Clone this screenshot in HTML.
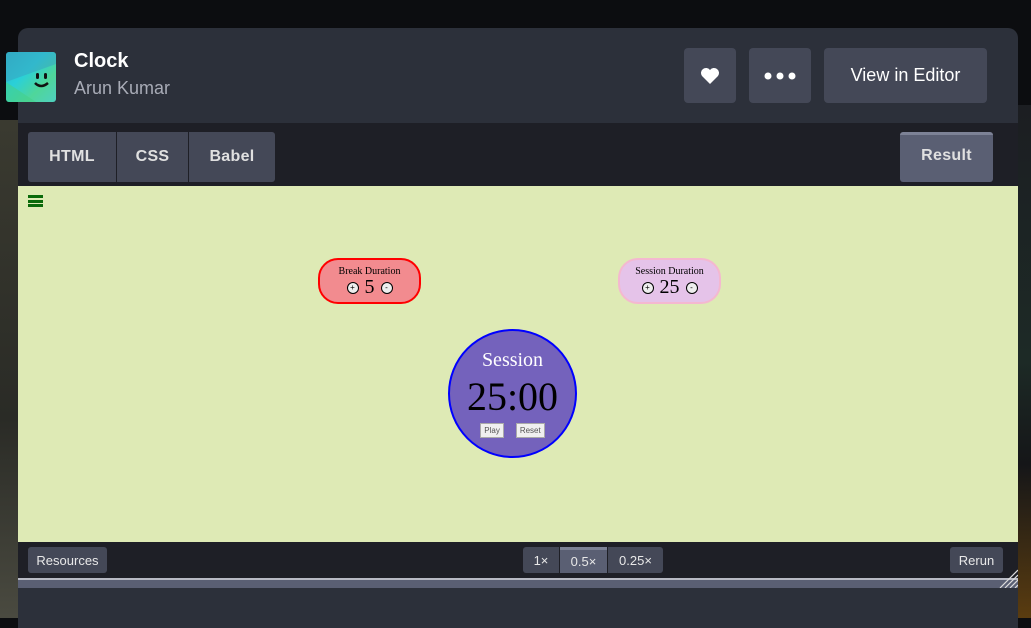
<!DOCTYPE html>
<html><head><meta charset="utf-8"><style>
*{margin:0;padding:0;box-sizing:border-box}
body{width:1031px;height:618px;overflow:hidden;background:#0c0d10;font-family:"Liberation Sans",sans-serif;position:relative}
.bgl{position:absolute;left:0;top:120px;width:18px;height:498px;background:linear-gradient(#3a3a30,#2a2b26 60%,#4a4a40)}
.bgr{position:absolute;right:0;top:105px;width:13px;height:513px;background:linear-gradient(#1c1e22,#1d2a26 50%,#151618 70%,#5a3c10 100%)}
.modal{position:absolute;left:18px;top:28px;width:1000px;height:600px;background:#2c303a;border-radius:10px 10px 0 0;overflow:hidden}
.av{position:absolute;left:6px;top:52px;width:50px;height:50px;border-radius:3px;background:linear-gradient(135deg,#2cb5c8,#2ad0d8 40%,#4fd69a 70%,#4fd0c0);overflow:hidden}
.abs{position:absolute}
.btn{position:absolute;background:#444857;border-radius:4px;color:#fff;display:flex;align-items:center;justify-content:center}
.tab{position:absolute;top:104px;height:50px;background:#444857;color:#e0e0e0;font-size:16px;font-weight:bold;letter-spacing:0.3px;display:flex;align-items:center;justify-content:center}
.dur{position:absolute;width:103px;height:46px;border-radius:20px;font-family:"Liberation Serif",serif;text-align:center}
.dur .t{font-size:10px;margin-top:6px}
.dur .r{font-size:20px;display:flex;justify-content:center;align-items:center;gap:6px;margin-top:-1px}
.c{width:12px;height:12px;border:1px solid #000;border-radius:50%;background:#eee;font-size:8px;line-height:10px;font-family:"Liberation Sans"}
.fb{position:absolute;top:548px;height:26px;background:#444857;color:#e8e8e8;font-size:13px;display:flex;align-items:center;justify-content:center;border-radius:3px}
.hb{position:absolute;left:10px;width:15px;height:3px;background:#0a6a0a}
</style></head><body>
<div class="bgl"></div><div class="bgr"></div>
<div class="modal">
 <div class="abs" style="left:0;top:95px;width:1000px;height:63px;background:#1e1f26"></div>
 <div class="abs" style="left:0;top:158px;width:1000px;height:356px;background:#deeab5"></div>
 <div class="abs" style="left:0;top:514px;width:1000px;height:37px;background:#1e1f26"></div>
 <div class="abs" style="left:0;top:550px;width:1000px;height:2px;background:#b8bac4"></div>
 <div class="abs" style="left:0;top:552px;width:1000px;height:8px;background:#5a5f73"></div>
 <div class="abs" style="left:56px;top:22px;color:#fff;font-size:20px;font-weight:bold">Clock</div>
 <div class="abs" style="left:56px;top:50px;color:#a8abb6;font-size:18px">Arun Kumar</div>
 <div class="btn" style="left:666px;top:20px;width:52px;height:55px"><svg width="20" height="18" viewBox="0 0 20 18"><path d="M10 17 L2 9 A5 5 0 0 1 10 3 A5 5 0 0 1 18 9 Z" fill="#fff"/></svg></div>
 <div class="btn" style="left:731px;top:20px;width:62px;height:55px"><svg width="32" height="8"><circle cx="4" cy="4" r="3.5" fill="#fff"/><circle cx="16" cy="4" r="3.5" fill="#fff"/><circle cx="28" cy="4" r="3.5" fill="#fff"/></svg></div>
 <div class="btn" style="left:806px;top:20px;width:163px;height:55px;font-size:18px">View in Editor</div>
 <div class="tab" style="left:10px;width:88px;border-radius:3px 0 0 3px">HTML</div>
 <div class="tab" style="left:99px;width:71px">CSS</div>
 <div class="tab" style="left:171px;width:86px;border-radius:0 3px 3px 0">Babel</div>
 <div class="tab" style="left:882px;width:93px;background:#5a5f73;border-top:3px solid #7d8296;border-radius:3px;padding-bottom:5px">Result</div>
 <div class="hb" style="top:167px"></div><div class="hb" style="top:171.5px"></div><div class="hb" style="top:176px"></div>
 <div class="dur" style="left:300px;top:230px;background:#f28b8f;border:2px solid #f00">
  <div class="t">Break Duration</div><div class="r"><div class="c">+</div>5<div class="c">-</div></div></div>
 <div class="dur" style="left:600px;top:230px;background:#e5c3e9;border:2px solid #f4b8d0">
  <div class="t">Session Duration</div><div class="r"><div class="c">+</div>25<div class="c">-</div></div></div>
 <div class="abs" style="left:430px;top:301px;width:129px;height:129px;border-radius:50%;background:#7462bc;border:2px solid #00f;text-align:center;font-family:'Liberation Serif',serif">
  <div style="color:#fff;font-size:20px;margin-top:18px">Session</div>
  <div style="font-size:40px;line-height:40px;margin-top:5px">25:00</div>
  <div style="display:flex;justify-content:center;gap:12px;margin-top:6px;font-family:'Liberation Sans';font-size:8px;color:#555">
   <span style="background:#f0f0f0;border:1px solid #aaa;padding:2px 3px">Play</span><span style="background:#f0f0f0;border:1px solid #aaa;padding:2px 3px">Reset</span></div>
 </div>
 <div class="fb" style="left:10px;width:79px;top:519px">Resources</div>
 <div class="fb" style="left:505px;width:36px;top:519px;border-radius:3px 0 0 3px">1×</div>
 <div class="fb" style="left:542px;width:47px;top:519px;background:#5a5f73;border-radius:0;border-top:3px solid #7d8296">0.5×</div>
 <div class="fb" style="left:590px;width:55px;top:519px;border-radius:0 3px 3px 0">0.25×</div>
 <div class="fb" style="left:932px;width:53px;top:519px">Rerun</div>
 <svg class="abs" style="left:978px;top:538px" width="22" height="22"><path d="M4 22L22 4M9 22L22 9M14 22L22 14M19 22L22 19" stroke="#ddd" stroke-width="1.2"/></svg>
</div>
<div class="av"><svg width="50" height="50"><path d="M0 0H50V12L0 30Z" fill="#3aa0c0" opacity=".5"/><path d="M0 30L30 50H0Z" fill="#45d08a" opacity=".6"/><rect x="30" y="21" width="3" height="6" rx="1.5" fill="#111"/><rect x="38" y="21" width="3" height="6" rx="1.5" fill="#111"/><path d="M29 31Q35 37 42 31" stroke="#111" stroke-width="2.5" fill="none"/></svg></div>
</body></html>
